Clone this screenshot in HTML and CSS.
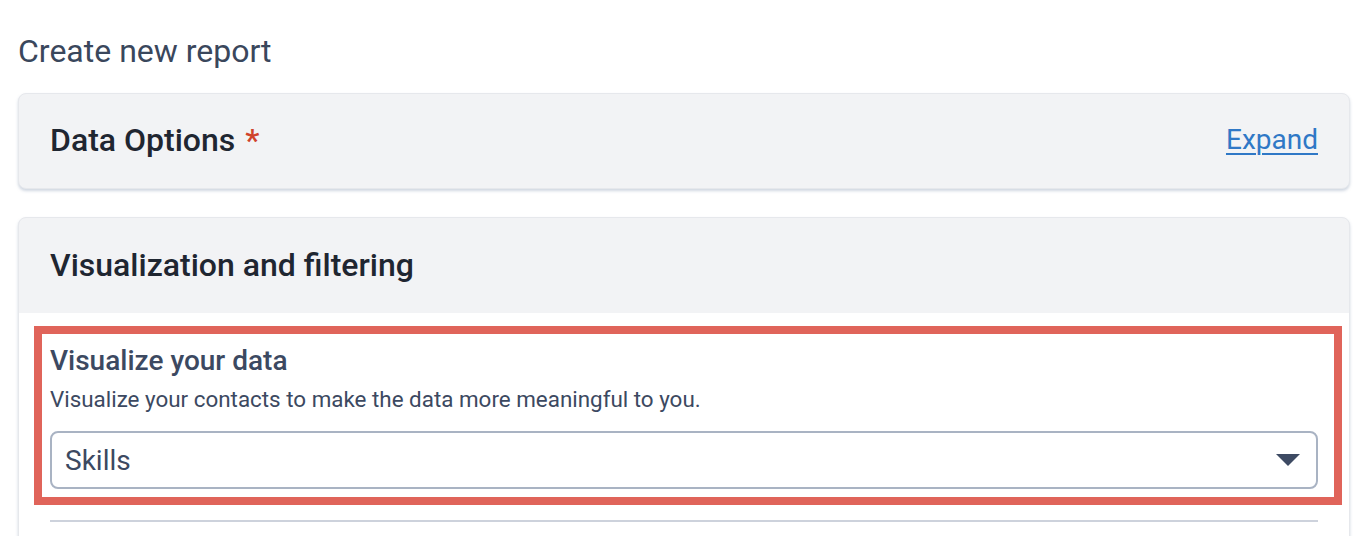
FILE: index.html
```html
<!DOCTYPE html>
<html lang="en">
<head>
<meta charset="utf-8">
<title>Create new report</title>
<link rel="stylesheet" href="styles.css">
</head>
<body>
<main class="page">
  <h1 class="page-title">Create new report</h1>

  <section class="card">
    <div class="card-header">
      <h2 class="card-title">Data Options <span class="required">*</span></h2>
      <a class="expand-link" href="#">Expand</a>
    </div>
  </section>

  <section class="card card--open">
    <div class="card-header">
      <h2 class="card-title">Visualization and filtering</h2>
    </div>
    <div class="card-body">
      <div class="field">
        <h3 class="field-title">Visualize your data</h3>
        <p class="field-desc">Visualize your contacts to make the data more meaningful to you.</p>
        <div class="select">
          <span class="select-value">Skills</span>
          <svg class="select-caret" width="24" height="12" viewBox="0 0 24 12" aria-hidden="true"><path d="M0 0h24L12 12z" fill="#3d4a63"/></svg>
        </div>
        <div class="highlight"></div>
      </div>
      <hr class="divider">
    </div>
  </section>
</main>
</body>
</html>
```

FILE: styles.css
```css
* { box-sizing: border-box; }
html, body { margin: 0; padding: 0; background: #ffffff; }
body {
  font-family: Roboto, "Liberation Sans", Arial, sans-serif;
  color: #3c4a5f;
  overflow: hidden;
}
.page {
  padding: 33px 22px 0 18px;
}
.page-title {
  margin: 0 0 24px 0;
  font-size: 32px;
  line-height: 36px;
  font-weight: 400;
  color: #3a475c;
}
.card {
  background: #f2f3f5;
  border: 1px solid #e6e8ec;
  border-radius: 8px;
  box-shadow: 0 2px 3px rgba(120, 140, 170, 0.35);
  margin-bottom: 28px;
}
.card-header {
  display: flex;
  align-items: center;
  justify-content: space-between;
  height: 94px;
  padding: 0 31px 3px;
}
.card--open .card-header { height: 95px; padding-bottom: 2px; }
.card-title {
  margin: 0;
  font-size: 32px;
  line-height: 36px;
  font-weight: 500;
  color: #1f2631;
}
.required {
  color: #d0432c;
  margin-left: 2px;
}
.expand-link {
  font-size: 28px;
  color: #2f78c6;
  text-decoration: underline;
  text-underline-offset: 4px;
  text-decoration-thickness: 2px;
}
.card--open {
  border-bottom-left-radius: 0;
  border-bottom-right-radius: 0;
}
.card-body {
  background: #ffffff;
  padding: 33px 31px 40px;
}
.field {
  position: relative;
}
.field-title {
  margin: 0;
  font-size: 28px;
  line-height: 30px;
  font-weight: 500;
  color: #3c4961;
}
.field-desc {
  margin: 11px 0 0;
  font-size: 22.4px;
  line-height: 24px;
  color: #3c4961;
}
.select {
  margin-top: 20px;
  height: 58px;
  border: 2px solid #a9b3c3;
  border-radius: 8px;
  background: #fff;
  display: flex;
  align-items: center;
  justify-content: space-between;
  padding: 0 16px 0 13px;
}
.select-value {
  font-size: 28px;
  color: #3c4961;
}
.select-caret { display: block; }
.highlight {
  position: absolute;
  top: -20px;
  left: -16px;
  right: -24px;
  bottom: -16px;
  border: 8px solid #e0645a;
  pointer-events: none;
}
.divider {
  margin: 31px 0 0;
  border: 0;
  height: 2px;
  background: #cdd2dc;
}
```
